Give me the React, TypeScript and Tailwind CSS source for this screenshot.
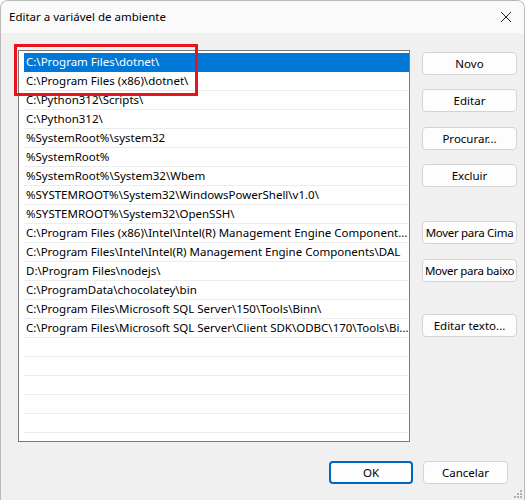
import React from 'react';

const paths = [
  'C:\\Program Files\\dotnet\\',
  'C:\\Program Files (x86)\\dotnet\\',
  'C:\\Python312\\Scripts\\',
  'C:\\Python312\\',
  '%SystemRoot%\\system32',
  '%SystemRoot%',
  '%SystemRoot%\\System32\\Wbem',
  '%SYSTEMROOT%\\System32\\WindowsPowerShell\\v1.0\\',
  '%SYSTEMROOT%\\System32\\OpenSSH\\',
  'C:\\Program Files (x86)\\Intel\\Intel(R) Management Engine Component...',
  'C:\\Program Files\\Intel\\Intel(R) Management Engine Components\\DAL',
  'D:\\Program Files\\nodejs\\',
  'C:\\ProgramData\\chocolatey\\bin',
  'C:\\Program Files\\Microsoft SQL Server\\150\\Tools\\Binn\\',
  'C:\\Program Files\\Microsoft SQL Server\\Client SDK\\ODBC\\170\\Tools\\Bi...',
  '', '', '', '', '', '',
];

const Btn = ({ label, className = '' }: { label: string; className?: string }) => (
  <button
    className={
      'h-[23px] w-[95px] rounded-[4px] border border-[#d3d3d3] bg-[#fdfdfd] text-[11.5px] text-black whitespace-nowrap overflow-hidden px-0 ' +
      className
    }
  >
    {label}
  </button>
);

export default function App() {
  return (
    <div className="w-[525px] h-[500px] bg-[#f0f0f0] overflow-hidden relative rounded-t-[8px] border-t border-x border-[#b9b9b9] font-['Segoe_UI','Noto_Sans',sans-serif] text-black">
      {/* title bar */}
      <div className="h-[32px] bg-[#fafafa] flex items-center justify-between pl-[8px] pr-[10px]">
        <span className="text-[11.5px]">Editar a variável de ambiente</span>
        <svg width="12" height="12" viewBox="0 0 12 12" className="mr-[2px]">
          <path d="M1 1 L11 11 M11 1 L1 11" stroke="#222" strokeWidth="1" />
        </svg>
      </div>

      <div className="flex pt-[17px]">
        {/* list box */}
        <div className="ml-[17px] w-[392px] h-[392px] border border-[#7a7a7a] bg-white overflow-hidden pt-[2px] pl-[5px]">
          {paths.map((p, i) => (
            <div
              key={i}
              className={
                'h-[19px] leading-[18px] pl-[2px] text-[11.5px] whitespace-nowrap overflow-hidden border-b ' +
                (i === 0 ? 'bg-[#0078d7] text-white border-[#0078d7]' : 'border-[#ececec]')
              }
            >
              {p}
            </div>
          ))}
        </div>

        {/* buttons */}
        <div className="ml-[12px] flex flex-col pt-[2px]">
          <Btn label="Novo" />
          <Btn label="Editar" className="mt-[14px]" />
          <Btn label="Procurar..." className="mt-[15px]" />
          <Btn label="Excluir" className="mt-[14px]" />
          <Btn label="Mover para Cima" className="mt-[34px] tracking-[-0.3px]" />
          <Btn label="Mover para baixo" className="mt-[15px] tracking-[-0.3px]" />
          <Btn label="Editar texto..." className="mt-[32px]" />
        </div>
      </div>

      {/* bottom buttons */}
      <div className="flex justify-end gap-[10px] pr-[16px] mt-[19px]">
        <button className="h-[23px] w-[84px] rounded-[4px] border-2 border-[#0067c0] bg-[#fdfdfd] text-[11.5px]">OK</button>
        <button className="h-[23px] w-[85px] rounded-[4px] border border-[#d3d3d3] bg-[#fdfdfd] text-[11.5px]">Cancelar</button>
      </div>

      {/* resize grip */}
      <svg width="10" height="10" viewBox="0 0 10 10" className="absolute right-[1px] bottom-[1px]">
        <rect x="7" y="1" width="2" height="2" fill="#b0b0b0" />
        <rect x="4" y="4" width="2" height="2" fill="#b0b0b0" />
        <rect x="7" y="4" width="2" height="2" fill="#b0b0b0" />
        <rect x="1" y="7" width="2" height="2" fill="#b0b0b0" />
        <rect x="4" y="7" width="2" height="2" fill="#b0b0b0" />
        <rect x="7" y="7" width="2" height="2" fill="#b0b0b0" />
      </svg>

      {/* red highlight annotation */}
      <div className="absolute left-[13px] top-[43px] w-[184px] h-[52px] border-[3px] border-[#e8141c]" />
    </div>
  );
}
